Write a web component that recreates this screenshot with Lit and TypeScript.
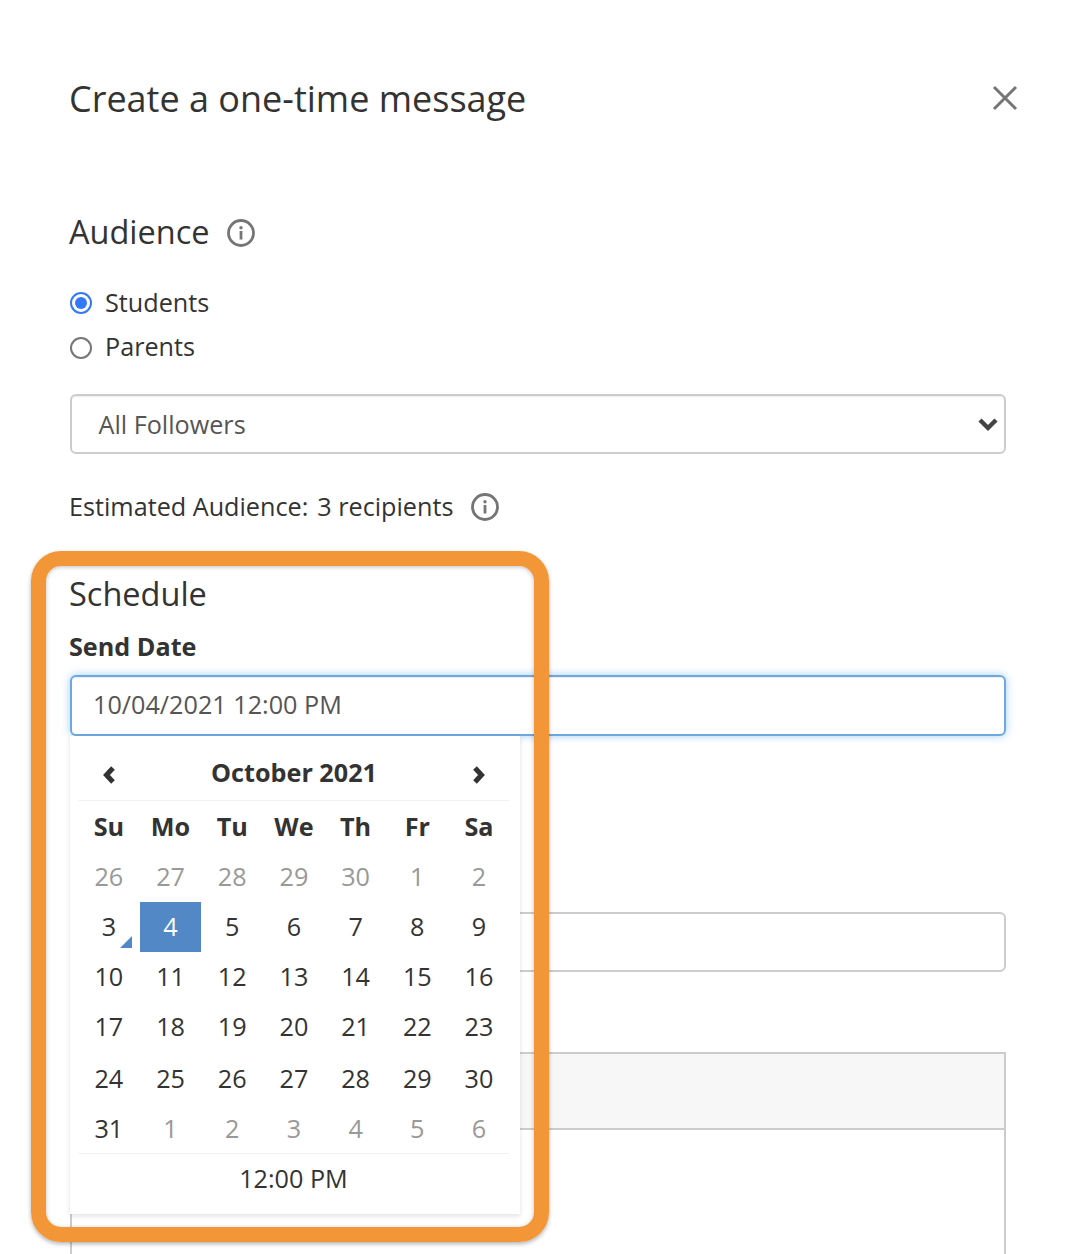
import { LitElement, html, css } from "lit";
import { customElement } from "lit/decorators.js";

const infoIcon = html`<svg class="info" width="28" height="28" viewBox="0 0 28 28" fill="none">
  <circle cx="14" cy="14" r="12.5" stroke="#757575" stroke-width="2.8"/>
  <rect x="12.6" y="12" width="2.8" height="8.5" fill="#757575"/>
  <circle cx="14" cy="8.7" r="1.7" fill="#757575"/>
</svg>`;

const weeks: { d: number; muted?: boolean }[][] = [
  [26, 27, 28, 29, 30, 1, 2].map((d) => ({ d, muted: true })),
  [3, 4, 5, 6, 7, 8, 9].map((d) => ({ d })),
  [10, 11, 12, 13, 14, 15, 16].map((d) => ({ d })),
  [17, 18, 19, 20, 21, 22, 23].map((d) => ({ d })),
  [24, 25, 26, 27, 28, 29, 30].map((d) => ({ d })),
  [{ d: 31 }, ...[1, 2, 3, 4, 5, 6].map((d) => ({ d, muted: true }))],
];

@customElement("app-root")
export class AppRoot extends LitElement {
  static styles = css`
    :host {
      display: block;
      position: relative;
      width: 1074px;
      height: 1254px;
      overflow: hidden;
      background: #fff;
      font-family: "Open Sans", sans-serif;
      color: #333;
      font-size: 25.2px;
    }
    .page { padding: 75px 68px 0 70px; }
    .title-row { display: flex; justify-content: space-between; align-items: center; height: 48px; }
    h1, h2 { margin: 0 0 0 -1px; font-weight: 400; }
    h1 { font-size: 36px; line-height: 48px; }
    h2 { font-size: 32.5px; line-height: 44px; }
    .close { margin-right: -12px; margin-top: -2px; display: block; }
    .audience { margin-top: 87px; display: flex; align-items: center; gap: 17px; }
    .audience .info { position: relative; top: 1px; }
    .info { display: block; }
    .radios { margin-top: 27px; }
    .radio { display: flex; align-items: center; gap: 13px; height: 44px; }
    .radio span:last-child { line-height: 42px; margin-bottom: 2px; }
    .dot { width: 22px; height: 22px; border-radius: 50%; box-sizing: border-box; border: 2px solid #767676; background: #fff; }
    .dot.off { margin-top: 2px; }
    .dot.on { border-color: #3478f6; padding: 3px; background: #3478f6 content-box; }
    .select {
      margin-top: 25px; height: 60px; box-sizing: border-box;
      border: 2px solid #ccc; border-radius: 6px;
      display: flex; align-items: center; justify-content: space-between;
      padding: 0 5px 0 26.5px;
      color: #555;
      box-shadow: inset 0 1px 1px rgba(0,0,0,.07);
    }
    .select span { margin-top: -1px; }
    .select svg { margin-top: -1px; }
    .estimate { margin: 35px 0 0 -1px; display: flex; align-items: center; line-height: 36px; height: 36px; }
    .estimate span { margin-top: -2px; }
    .estimate .count { margin-left: 9px; margin-right: 18px; }
    .schedule { margin-top: 47px; }
    .label { margin: 15px 0 0 -1px; font-weight: 700; line-height: 30px; height: 31px; }
    .field { position: relative; margin-top: 13px; }
    .input {
      height: 61px; box-sizing: border-box; background: #fff;
      border: 2px solid #6ea8e0; border-radius: 6px;
      padding: 0 21px 3px; display: flex; align-items: center; color: #555;
      box-shadow: 0 0 8px rgba(102,175,233,.6), inset 0 1px 1px rgba(0,0,0,.07);
    }
    .input2 {
      margin-top: 176px; height: 60px; box-sizing: border-box;
      border: 2px solid #ccc; border-radius: 6px;
    }
    .table { margin-top: 80px; border: 2px solid #ccc; border-bottom: 0; height: 300px; }
    .thead { height: 74px; background: #f7f7f7; border-bottom: 2px solid #ccc; }
    .cal {
      position: absolute; left: 0; top: 100%; width: 450px; height: 478px; z-index: 2;
      box-sizing: border-box; background: #fff; padding: 10px 11px 0 8px;
      box-shadow: 0 2px 5px rgba(0,0,0,.12);
    }
    .cal-head {
      display: flex; align-items: center; justify-content: space-between;
      height: 54px; padding: 0 23px 0 24px; border-bottom: 1px solid #f2f2f2;
      font-weight: 700;
    }
    .cal-head span { margin-top: -2px; }
    .cal-head svg { display: block; margin-top: 3px; }
    .grid {
      display: grid; grid-template-columns: repeat(7, 61.7px);
      grid-template-rows: 50px 50px 50px 50px 50px 52px 50px; margin-top: 1px;
    }
    .cell { display: flex; align-items: center; justify-content: center; position: relative; padding-bottom: 2px; box-sizing: border-box; }
    .cell.tall { padding-bottom: 0; }
    .dow { font-weight: 700; }
    .muted { color: #999; }
    .sel { background: #5288c6; color: #fff; }
    .today::after {
      content: ""; position: absolute; right: 8px; bottom: 4px;
      border-left: 12px solid transparent; border-bottom: 12px solid #5288c6;
    }
    .time {
      height: 48px; border-top: 1px solid #f2f2f2; margin-top: -1px;
      display: flex; align-items: center; justify-content: center;
    }
    .frame {
      position: absolute; left: 31px; top: 551px; width: 518px; height: 691px;
      box-sizing: border-box; border: 15px solid #f29638; border-radius: 30px; z-index: 3;
      box-shadow: 0 2px 4px rgba(0,0,0,.3), inset 0 1px 4px rgba(0,0,0,.25);
      pointer-events: none;
    }
  `;

  render() {
    const dows = ["Su", "Mo", "Tu", "We", "Th", "Fr", "Sa"];
    return html`
      <div class="page">
        <div class="title-row">
          <h1>Create a one-time message</h1>
          <svg class="close" width="26" height="26" viewBox="0 0 26 26" fill="none" stroke="#757575" stroke-width="3">
            <path d="M2 2L24 24M24 2L2 24"/>
          </svg>
        </div>
        <div class="audience"><h2>Audience</h2>${infoIcon}</div>
        <div class="radios">
          <div class="radio"><span class="dot on"></span><span>Students</span></div>
          <div class="radio"><span class="dot off"></span><span>Parents</span></div>
        </div>
        <div class="select">
          <span>All Followers</span>
          <svg width="22" height="16" viewBox="0 0 22 16" fill="none" stroke="#444" stroke-width="4.4">
            <path d="M3 4L11 12L19 4"/>
          </svg>
        </div>
        <div class="estimate"><span>Estimated Audience:</span><span class="count">3 recipients</span>${infoIcon}</div>
        <h2 class="schedule">Schedule</h2>
        <div class="label">Send Date</div>
        <div class="field">
          <div class="input">10/04/2021 12:00 PM</div>
          <div class="cal">
            <div class="cal-head">
              <svg width="14" height="20" viewBox="0 0 14 20" fill="none" stroke="#333" stroke-width="5"><path d="M11 3L4.5 10L11 17"/></svg>
              <span>October 2021</span>
              <svg width="14" height="20" viewBox="0 0 14 20" fill="none" stroke="#333" stroke-width="5"><path d="M3 3L9.5 10L3 17"/></svg>
            </div>
            <div class="grid">
              ${dows.map((d) => html`<div class="cell dow">${d}</div>`)}
              ${weeks.flat().map((c, i) => {
                const cls = [
                  "cell",
                  c.muted ? "muted" : "",
                  i === 7 ? "today" : "",
                  i === 8 ? "sel" : "",
                  i >= 28 && i < 35 ? "tall" : "",
                ].join(" ");
                return html`<div class=${cls}>${c.d}</div>`;
              })}
            </div>
            <div class="time">12:00 PM</div>
          </div>
        </div>
        <div class="input2"></div>
        <div class="table"><div class="thead"></div></div>
      </div>
      <div class="frame"></div>
    `;
  }
}
